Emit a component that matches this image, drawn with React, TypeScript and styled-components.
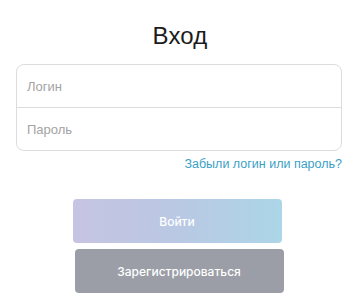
import styled, { createGlobalStyle } from "styled-components";

const GlobalStyle = createGlobalStyle`
  html, body {
    margin: 0;
    padding: 0;
    background: #ffffff;
  }
  body {
    font-family: "Liberation Sans", Arial, sans-serif;
  }
`;

const App = () => {
  return (
    <>
      <GlobalStyle />
      <LoginPage>
        <Title>Вход</Title>
        <FieldsCard>
          <Field placeholder="Логин" />
          <Field placeholder="Пароль" type="password" />
        </FieldsCard>
        <ForgotRow>
          <ForgotLink href="#">Забыли логин или пароль?</ForgotLink>
        </ForgotRow>
        <Actions>
          <Button variant="primary" shift={-2}>
            Войти
          </Button>
          <Button variant="secondary">Зарегистрироваться</Button>
        </Actions>
      </LoginPage>
    </>
  );
};

export default App;

const LoginPage = styled.div`
  display: flex;
  flex-direction: column;
  padding: 22px 15px 0 16px;
  width: 357px;
  box-sizing: border-box;
`;

const Title = styled.h1`
  margin: 0;
  text-align: center;
  font-size: 24px;
  line-height: 28px;
  font-weight: 400;
  color: #1c1c1c;
  letter-spacing: 0.2px;
  padding-left: 2px;
`;

const FieldsCard = styled.div`
  margin-top: 14px;
  border: 1px solid #dcdcdc;
  border-radius: 8px;
  display: flex;
  flex-direction: column;
  overflow: hidden;
`;

const Field = styled.input`
  height: 42px;
  border: none;
  outline: none;
  padding: 0 10px;
  font-family: inherit;
  font-size: 13px;
  color: #333;
  background: transparent;
  & + & {
    border-top: 1px solid #dcdcdc;
  }
  &::placeholder {
    color: #a3a3a3;
  }
`;

const ForgotRow = styled.div`
  display: flex;
  justify-content: flex-end;
  margin-top: 5px;
`;

const ForgotLink = styled.a`
  font-size: 12.5px;
  line-height: 16px;
  color: #3a9fc6;
  text-decoration: none;
`;

const Actions = styled.div`
  display: flex;
  flex-direction: column;
  align-items: center;
  gap: 6px;
  margin-top: 27px;
`;

const Button = styled.button<{ variant: "primary" | "secondary"; shift?: number }>`
  width: 209px;
  height: 44px;
  border: none;
  border-radius: 4px;
  font-family: Inter, "Liberation Sans", sans-serif;
  font-size: 12px;
  font-weight: 500;
  color: #ffffff;
  cursor: pointer;
  margin-left: ${(p) => (p.shift ? `${p.shift * 2}px` : "0")};
  background: ${(p) =>
    p.variant === "primary"
      ? "linear-gradient(90deg, #c6c4e2 0%, #b9c8e3 50%, #acd6e7 100%)"
      : "#9b9ea6"};
`;
